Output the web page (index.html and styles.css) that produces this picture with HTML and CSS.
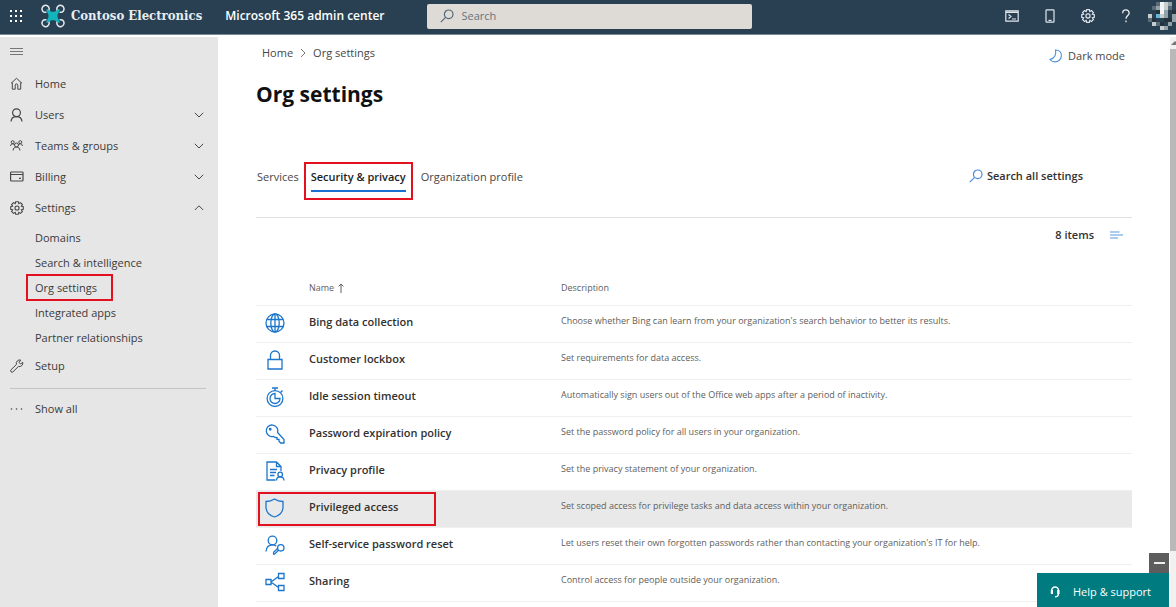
FILE: index.html
```html
<!DOCTYPE html>
<html lang="en">
<head>
<meta charset="utf-8">
<title>Org settings - Microsoft 365 admin center</title>
<link rel="stylesheet" href="styles.css">
</head>
<body>
<header class="topbar">
  <div class="brand">
    <button class="icon-btn" aria-label="App launcher"><svg width="14" height="14" viewBox="0 0 14 14" fill="#fff"><path d="M1 1h2v2H1zM6 1h2v2H6zM11 1h2v2h-2zM1 6h2v2H1zM6 6h2v2H6zM11 6h2v2h-2zM1 11h2v2H1zM6 11h2v2H6zM11 11h2v2h-2z"/></svg></button>
    <svg class="logo" width="24" height="24" viewBox="0 0 24 24" fill="none"><g stroke="#e4eaee" stroke-width="1.500"><path d="M1.800 7.200A3.600 3.600 0 1 1 8.200 5.200L7.600 7.300M1.800 7.200Q3 8.800 5.400 8.200"/><path d="M22.200 7.200A3.600 3.600 0 1 0 15.800 5.200L16.400 7.300M22.200 7.200Q21 8.800 18.600 8.200"/><path d="M1.800 16.800A3.600 3.600 0 1 0 8.200 18.800L7.600 16.700M1.800 16.800Q3 15.200 5.400 15.800"/><path d="M22.200 16.800A3.600 3.600 0 1 1 15.800 18.800L16.400 16.700M22.200 16.800Q21 15.200 18.600 15.800"/></g><path d="M6 6L10 8.500H14L18 6L15.800 10.500V13.500L18 18L14 15.500H10L6 18L8.200 13.500V10.500z" fill="#12b5bd" stroke="#12b5bd" stroke-width="1.600" stroke-linejoin="round"/></svg>
    <span class="company">Contoso Electronics</span>
    <span class="product">Microsoft 365 admin center</span>
  </div>
  <label class="search">
    <svg width="14" height="14" viewBox="0 0 14 14" fill="none" stroke="#53697a" stroke-width="1.200"><circle cx="8.700" cy="5.300" r="4.300"/><path d="M5.600 8.400L.8 13.200"/></svg>
    <input type="search" placeholder="Search" aria-label="Search">
  </label>
  <div class="tools">
    <button class="icon-btn" aria-label="Cloud shell"><svg width="14" height="12" viewBox="0 0 14 12" fill="none" stroke="#dfe7ec" stroke-width="1.200"><path d="M.8.8h12.400v10.400H.8zM.8 2.400h12.400M3.500 4.500l2.500 2-2.500 2M7 9h4"/></svg></button>
    <button class="icon-btn" aria-label="Mobile app"><svg width="10" height="14" viewBox="0 0 10 14" fill="none" stroke="#dfe7ec" stroke-width="1.200"><rect x="1" y=".8" width="8" height="12.400" rx=".6"/><path d="M3.500 11.400h3"/></svg></button>
    <button class="icon-btn" aria-label="Settings"><svg width="14" height="14" viewBox="1.200 1.200 11.600 11.600" fill="none" stroke="#dfe7ec"><path d="M5.900.9h2.200l.4 1.600 1.400-.9 1.600 1.600-.9 1.400 1.600.4v2.200l-1.600.4.9 1.400-1.600 1.600-1.400-.9-.4 1.600H5.900l-.4-1.600-1.400.9L2.500 9l.9-1.400-1.600-.4V5l1.600-.4L2.500 3.200l1.600-1.600 1.400.9z" transform="translate(0 .9)"/><circle cx="7" cy="7" r="1.700"/></svg></button>
    <button class="icon-btn" aria-label="Help"><svg width="10" height="14" viewBox="0 0 10 14" fill="none" stroke="#e8eef2" stroke-width="1.300"><path d="M1.700 4.200A3.200 3.200 0 0 1 8.200 4C8.200 6.400 5 6.700 5 9.800M5 11.600v1.600"/></svg></button>
    <button class="icon-btn avatar" aria-label="Account"><svg width="28" height="28" viewBox="0 0 7 7" shape-rendering="crispEdges"><path fill="#586b76" d="M1 1h1v1H1zM2 0h1v1H2zM5 1h1v1H5zM0 4h1v1H0zM2 5h1v1H2z"/><path fill="#25343c" d="M2 2h1v1H2zM1 4h1v1H1zM4 4h2v1H4zM3 5h1v1H3zM6 2h1v1H6z"/><path fill="#f2f4f4" d="M3 0h1v3H3z"/><path fill="#c5cdcf" d="M4 0h1v2H4zM0 3h1v1H0zM3 3h1v1H3zM1 5h1v1H1zM3 6h1v1H3z"/><path fill="#93a1a8" d="M5 0h1v1H5zM4 2h1v2H4zM6 3h1v2H6zM5 5h1v1H5zM2 1h1v1H2zM4 6h1v1H4z"/><path fill="#63b7dc" d="M2 3h1v1H2z"/></svg></button>
  </div>
</header>
<div class="shell">
  <nav class="sidebar" aria-label="Main">
    <button class="nav-toggle" aria-label="Collapse navigation"><svg width="14" height="8" viewBox="0 0 14 8" stroke="#777"><path d="M0 1.500h13M0 4.500h13M0 7.500h13"/></svg></button>
    <a class="nav-item" href="#"><svg width="14" height="14" viewBox="0 0 14 14" fill="none" stroke="#484644"><path d="M1 6.300L6.500 1.300 12 6.300M2.300 5.500v6.700h2.900V8.200a1.300 1.300 0 0 1 2.600 0v4h2.900V5.500"/></svg><span>Home</span></a>
    <button class="nav-item"><svg width="14" height="14" viewBox="0 0 14 14" fill="none" stroke="#484644" stroke-width="1.200"><circle cx="6.500" cy="4.700" r="3.900"/><path d="M1 13.500C1.300 10.500 3.500 8.600 6.500 8.600s5.200 1.900 5.500 4.900"/></svg><span>Users</span><svg class="chev" width="10" height="6" viewBox="0 0 10 6"><path d="M.8.800L5 5 9.200.8"/></svg></button>
    <button class="nav-item"><svg width="14" height="14" viewBox="0 0 14 14" fill="none" stroke="#484644"><circle cx="2.700" cy="3.200" r="1.500"/><circle cx="10.300" cy="3.200" r="1.500"/><circle cx="6.500" cy="6" r="2"/><path d="M.5 7C.7 5.600 1.500 4.800 2.700 4.800l1.900.8M12.500 7c-.2-1.400-1-2.200-2.200-2.200l-1.900.8M3 11.500C3.300 9.200 4.600 8 6.500 8s3.200 1.200 3.500 3.500"/></svg><span>Teams &amp; groups</span><svg class="chev" width="10" height="6" viewBox="0 0 10 6"><path d="M.8.800L5 5 9.200.8"/></svg></button>
    <button class="nav-item"><svg width="14" height="14" viewBox="0 0 14 14" fill="none" stroke="#484644" stroke-width="1.200"><rect x=".6" y="2" width="12.400" height="9" rx=".8"/><path d="M.6 4.500H13M9 8.300h2"/></svg><span>Billing</span><svg class="chev" width="10" height="6" viewBox="0 0 10 6"><path d="M.8.800L5 5 9.200.8"/></svg></button>
    <button class="nav-item" aria-expanded="true"><svg width="14" height="14" viewBox=".7 1.200 11.600 11.600" fill="none" stroke="#484644" stroke-width=".9"><path d="M5.900.9h2.200l.4 1.600 1.400-.9 1.600 1.600-.9 1.400 1.600.4v2.200l-1.600.4.9 1.400-1.600 1.600-1.400-.9-.4 1.600H5.900l-.4-1.600-1.400.9L2.500 9l.9-1.400-1.600-.4V5l1.600-.4L2.500 3.200l1.600-1.600 1.400.9z" transform="translate(-.5 .9)"/><circle cx="6.500" cy="7" r="1.700"/></svg><span>Settings</span><svg class="chev" width="10" height="6" viewBox="0 0 10 6"><path d="M.8 5L5 .8 9.200 5"/></svg></button>
    <ul class="subnav">
      <li><a href="#">Domains</a></li>
      <li><a href="#">Search &amp; intelligence</a></li>
      <li><a class="marked" href="#" aria-current="page">Org settings</a></li>
      <li><a href="#">Integrated apps</a></li>
      <li><a href="#">Partner relationships</a></li>
    </ul>
    <a class="nav-item" href="#"><svg width="14" height="14" viewBox="0 0 14 14" fill="none" stroke="#484644"><path d="M10.800 1.100A3.500 3.500 0 0 0 6.400 5.500L1 10.800a1.400 1.400 0 0 0 2 2L8.400 7.500A3.500 3.500 0 0 0 12.700 3.200L10.600 5 9 3.300z"/></svg><span>Setup</span></a>
    <hr class="nav-rule">
    <button class="nav-item"><svg width="14" height="14" viewBox="0 0 14 14" fill="#484644"><circle cx="1.500" cy="7" r=".8"/><circle cx="6.500" cy="7" r=".8"/><circle cx="11.500" cy="7" r=".8"/></svg><span>Show all</span></button>
  </nav>
  <main class="content">
    <div class="crumb-row">
      <div class="crumbs"><a href="#">Home</a><svg width="6" height="10" viewBox="0 0 6 10" fill="none" stroke="#777"><path d="M1 1l4 4-4 4"/></svg><a href="#">Org settings</a></div>
      <button class="mode"><svg width="14" height="14" viewBox="0 0 14 14" fill="none" stroke="#4b8fdb" stroke-width="1.100"><path d="M6.500 1C7.500 5.500 5.500 9 1 10.500 3 13 7 13.800 10 11.500S13.200 4.500 10.800 2.400C9.500 1.300 8 .9 6.500 1z"/></svg>Dark mode</button>
    </div>
    <h1 class="title">Org settings</h1>
    <div class="tab-row">
      <div class="tabs" role="tablist">
        <button class="tab" role="tab">Services</button>
        <div class="tab-mark"><button class="tab tab-active" role="tab" aria-selected="true">Security &amp; privacy</button></div>
        <button class="tab" role="tab">Organization profile</button>
      </div>
      <button class="search-all"><svg width="14" height="14" viewBox="0 0 14 14" fill="none" stroke="#4b8fdb" stroke-width="1.200"><circle cx="8.700" cy="5.300" r="4.300"/><path d="M5.600 8.400L.8 13.200"/></svg>Search all settings</button>
    </div>
    <div class="count-row"><span>8 items</span><button class="icon-btn" aria-label="View options"><svg width="14" height="8" viewBox="0 0 14 8" stroke="#5b9ae0"><path d="M1 1h9.500M1 4h13M1 7h8" stroke-width="1.200"/></svg></button></div>
    <table class="settings">
      <thead><tr><th class="c-icon" aria-label="Icon"></th><th class="c-name"><span class="sort">Name <svg width="6" height="10" viewBox="0 0 6 10" fill="none" stroke="#605e5c"><path d="M3 10V1M.6 3.400L3 1l2.400 2.400"/></svg></span></th><th>Description</th></tr></thead>
      <tbody>
        <tr><td class="c-icon"><svg viewBox="0 0 20 20"><circle cx="10" cy="10" r="9"/><ellipse cx="10" cy="10" rx="4.200" ry="9"/><path d="M10 1v18M1.800 6.500h16.400M1.800 13.500h16.400"/></svg></td><td class="c-name">Bing data collection</td><td>Choose whether Bing can learn from your organization's search behavior to better its results.</td></tr>
        <tr><td class="c-icon"><svg viewBox="0 0 20 20"><path d="M3 9.500h14v9.500H3zM5.500 9.500V5.500a4.500 4.500 0 0 1 9 0v4"/></svg></td><td class="c-name">Customer lockbox</td><td>Set requirements for data access.</td></tr>
        <tr><td class="c-icon"><svg viewBox="0 0 20 20"><circle cx="10" cy="11.500" r="7.900"/><path d="M10 3.500V1M7 1h6M15.500 5.500l2-2M10 6.500a5 5 0 1 0 5 5h-5z"/></svg></td><td class="c-name">Idle session timeout</td><td>Automatically sign users out of the Office web apps after a period of inactivity.</td></tr>
        <tr><td class="c-icon"><svg viewBox="0 0 20 20"><path d="M12.600 8.500A5.800 5.800 0 1 0 8.500 12.400L10.400 13.600H12V15.400H14V17.300L15.700 19H19V15.500z"/><circle cx="5.200" cy="5.200" r=".8"/></svg></td><td class="c-name">Password expiration policy</td><td>Set the password policy for all users in your organization.</td></tr>
        <tr><td class="c-icon"><svg viewBox="0 0 20 20"><path d="M10.500 19H2V1h9.500L16 5.500v4.500M11.500 1v4.500H16M5 8.500h7M5 11.500h6M5 14.500h4.500M11.500 19.500c0-2.600 1.500-3.600 3.700-3.600s3.700 1 3.700 3.600"/><circle cx="15.200" cy="13.500" r="2.300"/></svg></td><td class="c-name">Privacy profile</td><td>Set the privacy statement of your organization.</td></tr>
        <tr class="selected"><td class="c-icon"><svg viewBox="0 0 20 20"><path d="M9.500 1C7 2.700 4.200 3.500 1 3.500V9c0 5 3.500 8.500 8.500 10 5-1.500 8.500-5 8.500-10V3.500C14.800 3.500 12 2.700 9.500 1z"/></svg></td><td class="c-name">Privileged access<span class="row-mark"></span></td><td>Set scoped access for privilege tasks and data access within your organization.</td></tr>
        <tr><td class="c-icon"><svg viewBox="0 0 20 20"><circle cx="7.500" cy="5.500" r="4.300"/><path d="M1 16.500c.3-4 2.800-6.600 6.500-6.600 1.500 0 2.700.4 3.700 1.200M13.500 15.300L9.500 19.200H8.600v-2l4.200-4"/><circle cx="15.800" cy="12.800" r="3.200"/></svg></td><td class="c-name">Self-service password reset</td><td>Let users reset their own forgotten passwords rather than contacting your organization's IT for help.</td></tr>
        <tr><td class="c-icon"><svg viewBox="0 0 20 20"><path d="M1 7.500h5v5H1zM13.500 1.500h5.500v5h-5.500zM13.500 13.500h5.500v5h-5.500zM6 10l7.500-5.500M6 10l7.500 5.500"/></svg></td><td class="c-name">Sharing</td><td>Control access for people outside your organization.</td></tr>
      </tbody>
    </table>
  </main>
  <div class="scroll" aria-hidden="true"><svg width="6" height="12" viewBox="0 0 6 12"><path d="M1 8l4-4 1 1v3z" fill="#777"/></svg><div class="thumb"></div></div>
</div>
<aside class="help">
  <button class="help-min" aria-label="Minimize"></button>
  <button class="help-open"><svg width="12" height="12" viewBox="0 0 12 12" fill="none" stroke="#fff" stroke-width="1.500"><path d="M2.700 7.500V4.500A3.400 3.400 0 0 1 9.500 4.500V7.500Q9.500 10.800 6 10.800"/><path d="M2.900 4v4M9.300 4v4" stroke-width="2.200"/></svg>Help &amp; support</button>
</aside>
</body>
</html>
```
FILE: styles.css
```css
* { box-sizing: border-box; }
body {
  margin: 0;
  height: 100vh;
  display: flex;
  flex-direction: column;
  overflow: hidden;
  background: #fff;
  color: #323130;
  font: 11px/16px "Open Sans", "Noto Sans", sans-serif;
}
button { margin: 0; padding: 0; border: 0; background: none; color: inherit; font: inherit; cursor: pointer; }
a { color: inherit; text-decoration: none; }
svg { flex: none; }

.topbar {
  flex: none;
  height: 35px;
  display: grid;
  grid-template-columns: 1fr 325px 1fr;
  align-items: center;
  padding: 0 0 2px 2px;
  background: #293f52;
  border-bottom: 1px solid #7b8797;
}
.icon-btn { display: flex; align-items: center; justify-content: center; }
.brand { display: flex; align-items: center; padding-left: 7px; white-space: nowrap; }
.logo { margin: 0 6px 0 18px; }
.company { color: #e8edf0; font: bold 13px/16px "DejaVu Serif Condensed", "DejaVu Serif", serif; }
.product { margin-left: auto; padding-right: 42px; color: #fff; font-size: 12px; font-weight: 600; }
.search {
  display: flex;
  align-items: center;
  gap: 8px;
  height: 25px;
  padding: 0 13px;
  background: #dedad6;
  border-radius: 2px;
}
.search input { flex: 1; min-width: 0; padding: 0; border: 0; outline: 0; background: none; color: #53697a; font: inherit; }
.search input::placeholder { color: #66747e; opacity: 1; }
.tools { display: flex; align-items: center; justify-content: flex-end; gap: 12px; }
.tools .icon-btn { width: 26px; height: 28px; }
.tools .avatar { width: 28px; margin-left: -3px; }

.shell { flex: 1; min-height: 0; display: flex; padding-top: 2px; }

.sidebar { flex: none; width: 218px; background: #e6e6e6; color: #3b3a39; }
.nav-toggle { display: flex; align-items: center; height: 31px; padding: 0 0 3px 10px; }
.nav-item { display: flex; align-items: center; width: 100%; height: 31px; padding: 0 14px 0 10px; }
.nav-item span { padding-left: 11px; }
.chev { margin-left: auto; fill: none; stroke: #484644; }
.subnav { margin: 0; padding: 2px 0 0 26px; list-style: none; }
.subnav li { display: flex; height: 25px; }
.subnav a { display: flex; align-items: center; padding: 0 9px; }
.subnav .marked { height: 27px; margin: -1px 0; padding: 0 14px 0 7px; border: 2px solid #e3111f; }
.nav-rule { height: 1px; margin: 7px 12px 4px 10px; border: 0; background: #c4c4c4; }

.content { flex: 1; min-width: 0; padding: 0 38px; overflow: hidden; }
.crumb-row { display: flex; justify-content: space-between; padding: 8px 7px 0 6px; color: #484644; }
.crumbs { display: flex; align-items: center; gap: 7px; height: 16px; }
.mode { display: flex; align-items: center; gap: 5px; height: 22px; }
.title { margin: 12px 0 0; color: #111; font-size: 21px; line-height: 30px; font-weight: 700; }
.tab-row {
  display: flex;
  align-items: flex-start;
  justify-content: space-between;
  height: 109px;
  margin-bottom: 7px;
  padding-top: 53px;
  border-bottom: 1px solid #e0e0e0;
}
.tabs { display: flex; align-items: flex-start; }
.tab { height: 30px; color: #484644; }
.tabs > .tab { padding: 0 5px 0 1px; }
.tabs > .tab:last-child { padding: 0 0 0 8px; }
.tab-mark { padding: 0 5px 6px; border: 2px solid #e3111f; }
.tab-active { display: block; height: 28px; color: #201f1e; font-weight: 600; border-bottom: 2px solid #1870d0; }
.search-all { display: flex; align-items: center; gap: 4px; height: 28px; margin-right: 49px; font-weight: 600; }
.count-row { display: flex; align-items: center; justify-content: flex-end; gap: 15px; padding-right: 9px; height: 20px; font-weight: 600; }

.settings { position: relative; width: 100%; margin-top: 24px; border-collapse: collapse; }
.settings th { height: 36px; padding: 2px 0 0; color: #605e5c; font-size: 9px; font-weight: 400; text-align: left; }
.settings td { height: 37px; padding: 0 0 5px; border-top: 1px solid #efefef; color: #605e5c; font-size: 9px; }
.settings tbody { border-bottom: 1px solid #efefef; }
.sort { display: flex; align-items: center; gap: 4px; }
.settings .c-icon { width: 53px; padding: 0 0 2px 9px; }
.settings td.c-icon svg { display: block; width: 20px; height: 20px; fill: none; stroke: #1c76cd; stroke-width: 1.3; }
.settings .c-name { width: 252px; }
.settings td.c-name { position: relative; padding-bottom: 4px; color: #323130; font-size: 11px; font-weight: 600; }
.selected { background: #e9e9e9; }
.row-mark { position: absolute; inset: 1px 125px 1px -51px; border: 2px solid #e3111f; }

.scroll { flex: none; width: 6px; display: flex; flex-direction: column; background: #f1f1f1; }
.thumb { height: 88%; background: #b9b9b9; }

.help { position: fixed; right: 7px; bottom: 0; display: flex; flex-direction: column; align-items: flex-end; }
.help-min { display: flex; align-items: center; justify-content: center; width: 20px; height: 20px; background: #5d5d5d; }
.help-min::before { content: ""; width: 11px; height: 2px; background: #eee; }
.help-open { display: flex; align-items: center; gap: 12px; height: 34px; padding: 4px 18px 0 12px; background: #007b80; color: #fff; }
```
